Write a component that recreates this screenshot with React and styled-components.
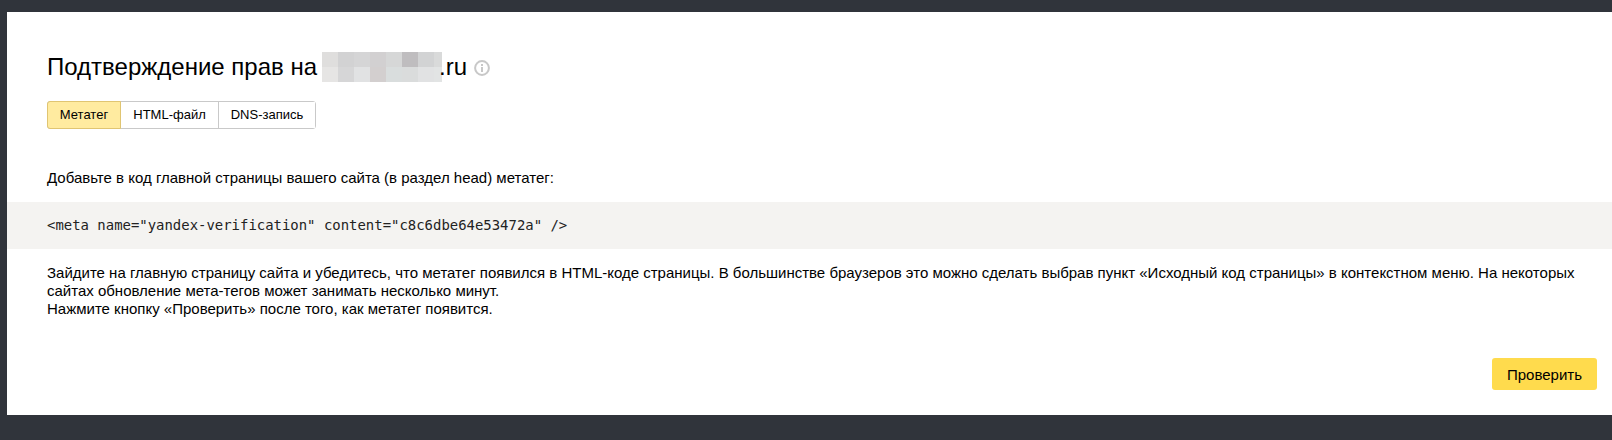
import React from 'react';
import styled, { createGlobalStyle } from 'styled-components';

const Global = createGlobalStyle`
  html, body {
    margin: 0;
    padding: 0;
    background: #30343b;
  }
  body {
    font-family: "Liberation Sans", Arial, sans-serif;
    color: #000;
  }
`

const Page = styled.div`
  width: 1612px;
  height: 440px;
  box-sizing: border-box;
  padding: 12px 0 25px 7px;
  overflow: hidden;
`
const Card = styled.div`
  height: 403px;
  background: #fff;
  display: flex;
  flex-direction: column;
  padding-top: 40px;
  box-sizing: border-box;
`
const Head = styled.div`
  padding-left: 40px;
`
const Title = styled.h1`
  margin: 0;
  font-size: 24px;
  font-weight: 400;
  line-height: 30px;
  height: 30px;
  display: flex;
  align-items: center;
`
const Mosaic = styled.span`
  display: inline-grid;
  grid-template-columns: repeat(7, 16px) 8px;
  grid-auto-rows: 15px;
  margin: 0 -3px 0 5px;
`
const Cell = styled.span`
  background: ${(p) => p.$c};
`
const Info = styled.svg`
  width: 16px;
  height: 16px;
  margin-left: 7px;
  margin-top: 2px;
`
const Tabs = styled.div`
  display: inline-flex;
  margin-top: 19px;
  height: 28px;
  box-sizing: border-box;
  border: 1px solid #c9c9c9;
  border-radius: 3px;
`
const Tab = styled.div`
  width: ${(p) => p.$w}px;
  box-sizing: border-box;
  text-align: center;
  font-size: 13px;
  line-height: 26px;
  color: #000;
  background: #fff;
  border-left: ${(p) => (p.$noDivider ? 'none' : '1px solid #c9c9c9')};
`
const ActiveTab = styled(Tab)`
  margin: -1px 0 -1px -1px;
  background: #ffeba0;
  border: 1px solid #e0c572;
  border-radius: 3px 0 0 3px;
`
const Text = styled.p`
  margin: ${(p) => p.$top}px 0 0;
  padding: 0 30px 0 40px;
  font-size: 15px;
  line-height: 18px;
`
const Code = styled.div`
  margin-top: 15px;
  height: 47px;
  background: #f4f3f1;
  padding-left: 40px;
  font-family: "DejaVu Sans Mono", monospace;
  font-size: 13.95px;
  line-height: 47px;
  color: #222;
`
const Footer = styled.div`
  margin-top: auto;
  padding: 0 15px 25px 0;
  display: flex;
  justify-content: flex-end;
`
const Button = styled.button`
  height: 32px;
  width: 105px;
  border: none;
  border-radius: 3px;
  background: #ffdb4d;
  font-family: inherit;
  font-size: 15px;
  color: #000;
  padding: 0;
`

const mosaic = [
  '#dfdedd', '#d2d2d3', '#d5d5d6', '#d2d0d1', '#d6d7d7', '#bfbdbf', '#d2d3d4', '#d9dada',
  '#e6e5e4', '#d6d6d7', '#e1e2e3', '#d3cfcf', '#d9dddd', '#dadcdc', '#e1e2e3', '#e2e4e4',
];

const App = () => {
  return (
    <Page>
      <Global />
      <Card>
        <Head>
          <Title>
            Подтверждение прав на
            <Mosaic>
              {mosaic.map((c, i) => <Cell key={i} $c={c} />)}
            </Mosaic>
            .ru
            <Info viewBox="0 0 16 16" fill="none">
              <circle cx="8" cy="8" r="6.9" stroke="#c8c8c8" strokeWidth="2" />
              <rect x="7" y="7" width="2" height="5" fill="#c8c8c8" />
              <rect x="7" y="4" width="2" height="2" fill="#c8c8c8" />
            </Info>
          </Title>
          <Tabs>
            <ActiveTab $w={74}>Метатег</ActiveTab>
            <Tab $w={97} $noDivider>HTML-файл</Tab>
            <Tab $w={97}>DNS-запись</Tab>
          </Tabs>
        </Head>
        <Text $top={40}>Добавьте в код главной страницы вашего сайта (в раздел head) метатег:</Text>
        <Code>{'<meta name="yandex-verification" content="c8c6dbe64e53472a" />'}</Code>
        <Text $top={15}>
          Зайдите на главную страницу сайта и убедитесь, что метатег появился в HTML-коде страницы. В большинстве браузеров это можно сделать выбрав пункт «Исходный код страницы» в контекстном меню. На некоторых сайтах обновление мета-тегов может занимать несколько минут.
          <br />
          Нажмите кнопку «Проверить» после того, как метатег появится.
        </Text>
        <Footer>
          <Button>Проверить</Button>
        </Footer>
      </Card>
    </Page>
  );
}

export default App;
